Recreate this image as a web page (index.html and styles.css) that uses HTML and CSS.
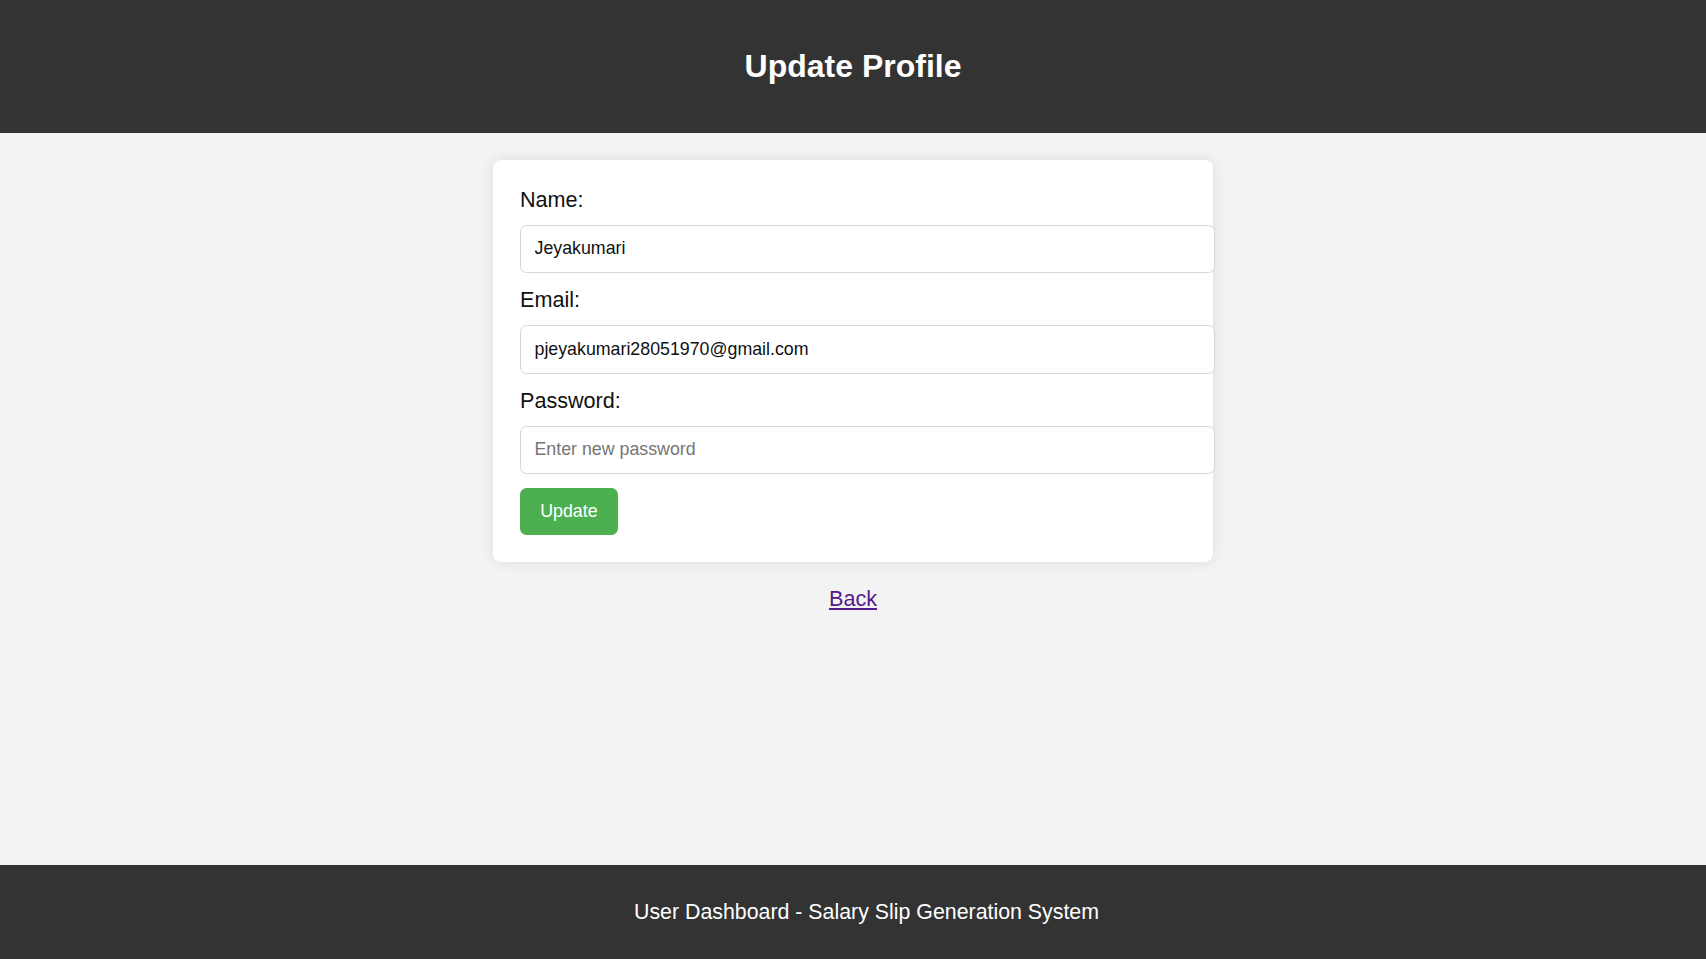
FILE: index.html
```html
<!DOCTYPE html>
<html lang="en">
<head>
<meta charset="utf-8">
<title>Update Profile</title>
<link rel="stylesheet" href="styles.css">
</head>
<body>
<header class="site-header">
  <h1 class="site-title">Update Profile</h1>
</header>
<main class="main">
  <form class="card">
    <label class="field-label" for="name">Name:</label>
    <input class="field-input" id="name" type="text" value="Jeyakumari">
    <label class="field-label" for="email">Email:</label>
    <input class="field-input" id="email" type="email" value="pjeyakumari28051970@gmail.com">
    <label class="field-label" for="password">Password:</label>
    <input class="field-input" id="password" type="password" placeholder="Enter new password">
    <button class="btn" type="button">Update</button>
  </form>
  <div class="back-row"><a class="back-link" href="#">Back</a></div>
</main>
<footer class="site-footer">
  <p class="footer-text">User Dashboard - Salary Slip Generation System</p>
</footer>
</body>
</html>
```
FILE: styles.css
```css
* { box-sizing: border-box; }
html, body { margin: 0; padding: 0; }
body {
  font-family: "Liberation Sans", Arial, sans-serif;
  background: #f3f3f3;
  min-height: 100vh;
  display: flex;
  flex-direction: column;
}
.site-header {
  background: #333333;
  color: #ffffff;
  height: 133px;
  display: flex;
  align-items: center;
  justify-content: center;
}
.site-title {
  margin: 0;
  font-size: 32px;
  line-height: 37px;
  font-weight: bold;
}
.main {
  flex: 1;
  padding-top: 27px;
  display: flex;
  flex-direction: column;
  align-items: center;
}
.card {
  width: 720px;
  background: #ffffff;
  padding: 26.7px 27px;
  border-radius: 8px;
  box-shadow: 0 0 13px rgba(0, 0, 0, 0.1);
  display: flex;
  flex-direction: column;
  align-items: flex-start;
}
.field-label {
  display: block;
  font-size: 21.6px;
  line-height: 25px;
  height: 25px;
  color: #111;
  margin-bottom: 13px;
}
.field-input {
  display: block;
  flex: none;
  width: calc(100% + 29px);
  height: 48.5px;
  margin: 0 0 14px 0;
  padding: 0 13.5px;
  font-family: "Liberation Sans", Arial, sans-serif;
  font-size: 17.8px;
  color: #111;
  border: 1px solid #d6d6d6;
  border-radius: 6.5px;
  background: #fff;
}
.field-input:last-of-type { margin-bottom: 13.5px; }
.field-input::placeholder { color: #757575; }
.btn {
  flex: none;
  height: 47.3px;
  padding: 0 20.25px;
  background: #4caf50;
  color: #fff;
  font-family: "Liberation Sans", Arial, sans-serif;
  font-size: 17.8px;
  border: none;
  border-radius: 6.5px;
}
.back-row {
  margin-top: 24px;
  font-size: 21.6px;
  line-height: 25px;
  text-align: center;
}
.back-link { color: #551a8b; }
.site-footer {
  background: #333333;
  color: #ffffff;
  height: 94px;
  padding-left: 27px;
  display: flex;
  align-items: center;
  justify-content: center;
}
.footer-text {
  margin: 0;
  font-size: 21.35px;
  line-height: 25px;
}
```
